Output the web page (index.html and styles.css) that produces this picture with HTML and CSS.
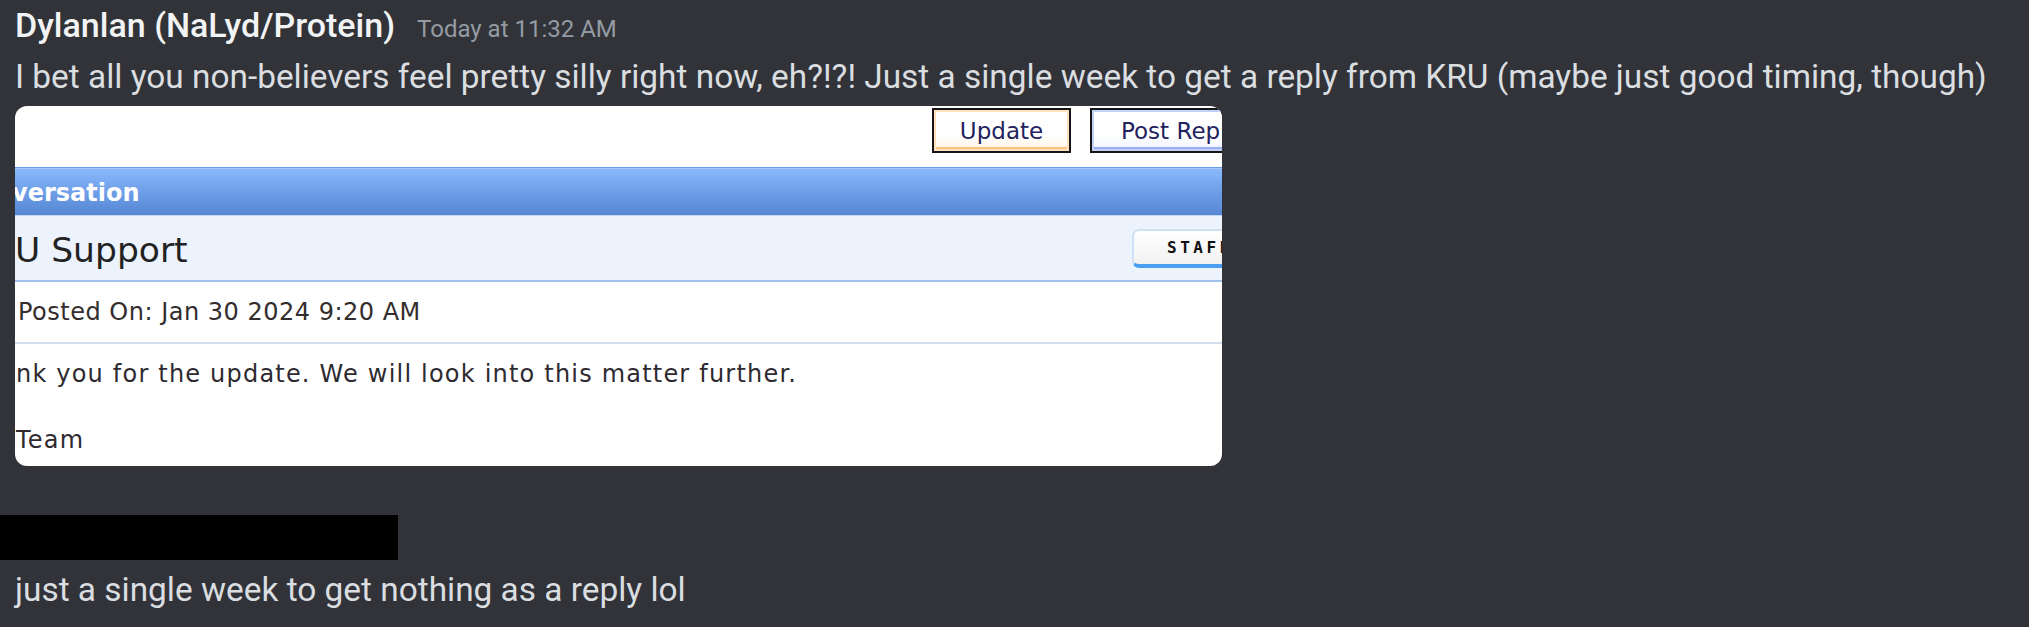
FILE: index.html
```html
<!DOCTYPE html>
<html lang="en">
<head>
<meta charset="utf-8">
<title>Chat</title>
<link rel="stylesheet" href="styles.css">
</head>
<body>
<div class="chat">
  <div class="message">
    <div class="header">
      <span class="username">Dylanlan (NaLyd/Protein)</span><span class="timestamp">Today at 11:32 AM</span>
    </div>
    <div class="content">I bet all you non-believers feel pretty silly right now, eh?!?! Just a single week to get a reply from KRU (maybe just good timing, though)</div>
    <div class="embed">
      <div class="toolbar">
        <span class="btn btn-update">Update</span>
        <span class="btn btn-post">Post Reply</span>
      </div>
      <div class="band"><span class="band-title">versation</span></div>
      <div class="titlebar">
        <span class="title">U Support</span>
        <span class="staff">STAFF</span>
      </div>
      <div class="meta">Posted On: Jan 30 2024 9:20 AM</div>
      <div class="body">nk you for the update. We will look into this matter further.<br><br>Team</div>
    </div>
  </div>
  <div class="message second">
    <div class="redact"></div>
    <div class="content">just a single week to get nothing as a reply lol</div>
  </div>
</div>
</body>
</html>
```

FILE: styles.css
```css
* { box-sizing: border-box; }
html, body {
  margin: 0;
  padding: 0;
  background: #313338;
  width: 2029px;
  height: 627px;
  overflow: hidden;
}
.chat {
  font-family: Roboto, "Noto Sans", sans-serif;
  padding-top: 1px;
}
.message {
  padding-left: 15px;
}
.header, .content {
  font-size: 33.4px;
  line-height: 48px;
  white-space: nowrap;
}
.username {
  color: #f2f3f5;
  font-weight: 500;
  font-size: 34px;
}
.timestamp {
  color: #949ba4;
  font-size: 24px;
  margin-left: 22px;
}
.content {
  color: #dbdee1;
}
.embed {
  margin-top: 5px;
  width: 1207px;
  height: 360px;
  border-radius: 12px;
  overflow: hidden;
  background: #ffffff;
  font-family: "DejaVu Sans", Verdana, sans-serif;
  color: #2a2a2a;
}
.toolbar {
  height: 61px;
  padding-top: 2px;
  display: flex;
  justify-content: flex-end;
  align-items: flex-start;
  gap: 19px;
}
.btn {
  display: flex;
  align-items: center;
  height: 45px;
  border: 2px solid #151515;
  font-size: 23px;
  color: #22225e;
  white-space: nowrap;
}
.btn-update {
  width: 139px;
  justify-content: center;
  background: linear-gradient(#ffffff 60%, #fff3e2);
  box-shadow: inset 0 0 0 2px #ffe1bd, inset 0 -4px 0 #ffc27c;
}
.btn-post {
  width: 190px;
  padding-left: 29px;
  margin-right: -58px;
  background: linear-gradient(#ffffff 60%, #eef2ff);
  box-shadow: inset 0 0 0 2px #c3d1fa, inset 0 -4px 0 #98b0f2;
}
.band {
  height: 48px;
  border-top: 1px solid #6c9be6;
  padding-top: 3px;
  background: linear-gradient(#8ab9fc, #6e9fe8 50%, #5686d3);
  box-shadow: inset 0 1px 0 #a6c8fc;
}
.band-title {
  display: block;
  margin-left: -3px;
  font-weight: bold;
  font-size: 24px;
  line-height: 44px;
  color: #ffffff;
}
.titlebar {
  height: 67px;
  display: flex;
  justify-content: space-between;
  align-items: flex-start;
  padding-top: 13px;
  background: #edf3fd;
  border-top: 1px solid #c4d8f4;
  border-bottom: 2px solid #a2c2ee;
}
.title {
  margin-top: 1px;
  font-size: 34.5px;
  line-height: 40px;
  color: #222222;
}
.staff {
  width: 130px;
  height: 39px;
  margin-right: -40px;
  padding-left: 33px;
  display: flex;
  align-items: center;
  border: 2px solid #cfe1f5;
  border-bottom: 4px solid #4c9ff0;
  border-radius: 7px;
  background: linear-gradient(#ffffff, #f1f1f1);
  font-family: "DejaVu Sans Mono", monospace;
  font-weight: bold;
  font-size: 16px;
  letter-spacing: 3.5px;
  color: #111111;
  white-space: nowrap;
  overflow: hidden;
}
.meta {
  padding: 14px 0 13px 3px;
  font-size: 24px;
  letter-spacing: 0.5px;
  line-height: 33px;
  border-bottom: 2px solid #d3ddec;
  color: #332d2d;
}
.body {
  padding: 14px 0 0 1px;
  font-size: 24px;
  letter-spacing: 1.2px;
  line-height: 33px;
  color: #2e2a30;
  white-space: nowrap;
}
.second {
  padding-left: 0;
  margin-top: 49px;
}
.redact {
  width: 398px;
  height: 45px;
  background: #000000;
}
.second .content {
  padding-left: 15px;
  margin-top: 6px;
}
```
